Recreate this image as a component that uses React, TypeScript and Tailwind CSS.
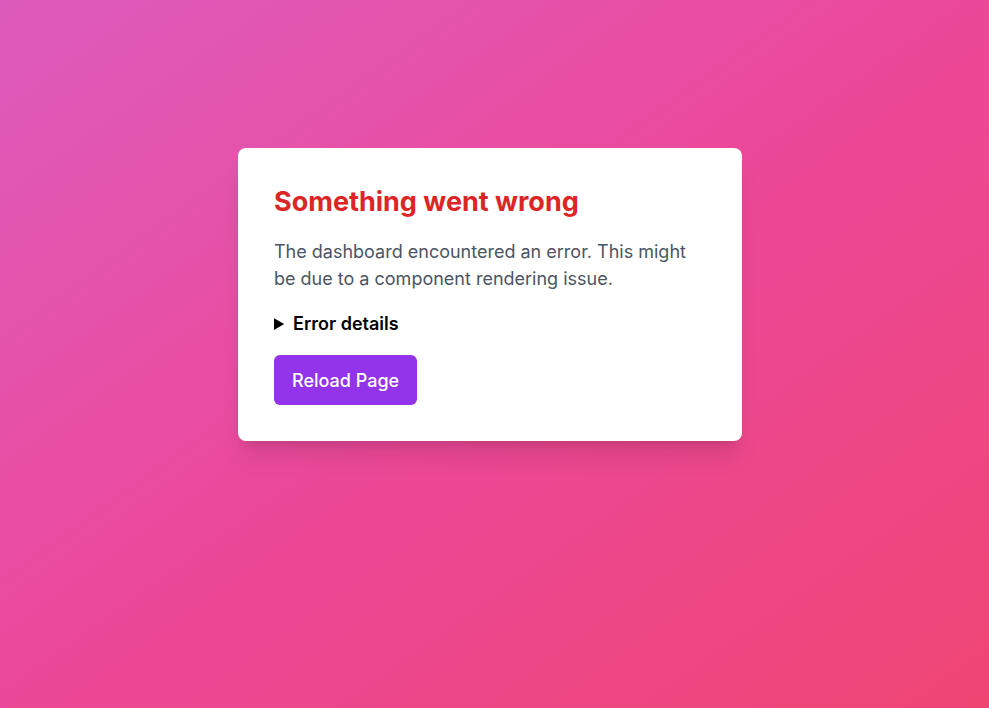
import React from 'react';

export default function App() {
  return (
    <div
      className="min-h-screen w-full bg-gradient-to-br from-[#dd5bbc] via-[#ec4899] to-[#ef4573] flex justify-center items-start pt-[148px] pr-[9px]"
      style={{ fontFamily: 'Inter, "Noto Sans", sans-serif' }}
    >
      <div className="w-[504px] bg-white rounded-lg shadow-xl p-9">
        <h2 className="mt-px text-[27px] leading-[34px] font-bold text-[#dc2626]">Something went wrong</h2>
        <p className="mt-[19px] text-[18px] leading-[27px] text-[#4b5563]">
          The dashboard encountered an error. This might be due to a component rendering issue.
        </p>
        <details className="mt-[18px]">
          <summary className="cursor-pointer text-[18px] leading-[27px] font-semibold text-black">
            Error details
          </summary>
        </details>
        <button className="mt-[18px] h-[50px] px-[18px] rounded-md bg-[#9333ea] text-white text-[18px] font-medium">
          Reload Page
        </button>
      </div>
    </div>
  );
}
